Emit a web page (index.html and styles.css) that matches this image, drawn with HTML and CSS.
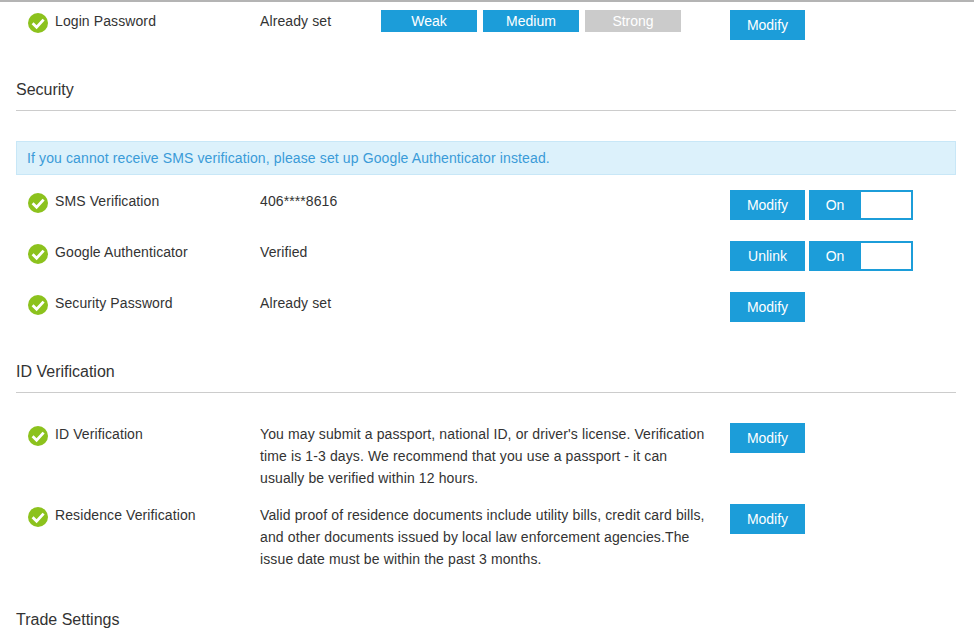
FILE: index.html
```html
<!DOCTYPE html>
<html lang="en">
<head>
<meta charset="utf-8">
<title>Account Security</title>
<link rel="stylesheet" href="styles.css">
</head>
<body>
<svg class="defs" width="0" height="0" aria-hidden="true"><defs><symbol id="ok" viewBox="0 0 20 20"><circle cx="10" cy="10" r="10" fill="#8cc21d"/><path d="M4.6 10.2 8.6 14.2 15.6 6.6" fill="none" stroke="#fff" stroke-width="2.8"/></symbol></defs></svg>
<main class="page">
  <div class="row row-first">
    <div class="name"><svg class="check"><use href="#ok"/></svg><span>Login Password</span></div>
    <div class="value value-short">Already set</div>
    <div class="strength">
      <span class="bar">Weak</span><span class="bar">Medium</span><span class="bar bar-off">Strong</span>
    </div>
    <div class="actions"><a class="btn">Modify</a></div>
  </div>

  <h2 class="heading">Security</h2>
  <div class="alert">If you cannot receive SMS verification, please set up Google Authenticator instead.</div>
  <div class="row">
    <div class="name"><svg class="check"><use href="#ok"/></svg><span>SMS Verification</span></div>
    <div class="value">406****8616</div>
    <div class="actions"><a class="btn">Modify</a><span class="toggle"><span class="toggle-on">On</span></span></div>
  </div>
  <div class="row">
    <div class="name"><svg class="check"><use href="#ok"/></svg><span>Google Authenticator</span></div>
    <div class="value">Verified</div>
    <div class="actions"><a class="btn">Unlink</a><span class="toggle"><span class="toggle-on">On</span></span></div>
  </div>
  <div class="row">
    <div class="name"><svg class="check"><use href="#ok"/></svg><span>Security Password</span></div>
    <div class="value">Already set</div>
    <div class="actions"><a class="btn">Modify</a></div>
  </div>

  <h2 class="heading heading-id">ID Verification</h2>
  <div class="row row-text">
    <div class="name"><svg class="check"><use href="#ok"/></svg><span>ID Verification</span></div>
    <div class="value">You may submit a passport, national ID, or driver's license. Verification time is 1-3 days. We recommend that you use a passport - it can usually be verified within 12 hours.</div>
    <div class="actions"><a class="btn">Modify</a></div>
  </div>
  <div class="row row-text">
    <div class="name"><svg class="check"><use href="#ok"/></svg><span>Residence Verification</span></div>
    <div class="value">Valid proof of residence documents include utility bills, credit card bills, and other documents issued by local law enforcement agencies.The issue date must be within the past 3 months.</div>
    <div class="actions"><a class="btn">Modify</a></div>
  </div>

  <h2 class="heading heading-trade">Trade Settings</h2>
</main>
</body>
</html>
```
FILE: styles.css
```css
html, body { margin: 0; padding: 0; height: 638px; overflow: hidden; background: #fff; }
body { font-family: "Liberation Sans", Arial, sans-serif; font-size: 14px; color: #333; border-top: 2px solid #b4b4b4; box-sizing: border-box; }
.defs { position: absolute; }
.page { width: 940px; margin-left: 16px; padding-top: 8px; }
.row { display: flex; align-items: flex-start; height: 30px; margin-bottom: 21px; }
.row-first { margin-bottom: 10px; }
.row-text { height: 60px; margin-bottom: 21px; }
.name { width: 244px; padding-left: 12px; box-sizing: border-box; display: flex; color: #333; line-height: 22px; flex: none; letter-spacing: 0.1px; }
.check { width: 20px; height: 20px; margin-top: 3px; margin-right: 7px; flex: none; }
.name span { display: block; }
.value { width: 470px; flex: none; line-height: 22px; padding-right: 20px; box-sizing: border-box; color: #333; letter-spacing: 0.1px; }
.row-text .value { letter-spacing: 0.12px; }
.value-short { width: 121px; padding-right: 0; }
.strength { display: flex; gap: 6px; width: 349px; flex: none; }
.bar { width: 96px; height: 22px; line-height: 22px; text-align: center; background: #1c9dd9; color: #fff; }
.bar-off { background: #cbcbcb; }
.actions { display: flex; gap: 4px; flex: none; }
.btn { display: block; width: 75px; height: 30px; line-height: 30px; text-align: center; background: #1c9dd9; color: #fff; }
.toggle { display: block; width: 104px; height: 30px; box-sizing: border-box; border: 2px solid #1c9dd9; background: #fff; }
.toggle-on { display: block; width: 50px; height: 26px; line-height: 26px; box-sizing: border-box; padding-right: 2px; text-align: center; background: #1c9dd9; color: #fff; }
.heading { margin: 0; height: 61px; box-sizing: border-box; padding-top: 30px; line-height: 20px; font-size: 16px; font-weight: 400; color: #333; border-bottom: 1px solid #ccc; margin-bottom: 30px; }
.alert { height: 34px; line-height: 32px; box-sizing: border-box; padding-left: 10px; background: #dcf1fb; border: 1px solid #c8e7f7; color: #3a9bd8; margin-bottom: 15px; letter-spacing: 0.12px; }
.heading-id { height: 50px; padding-top: 19px; }
.heading-trade { height: 45px; padding-top: 25px; border-bottom: 0; margin-bottom: 0; }
```
